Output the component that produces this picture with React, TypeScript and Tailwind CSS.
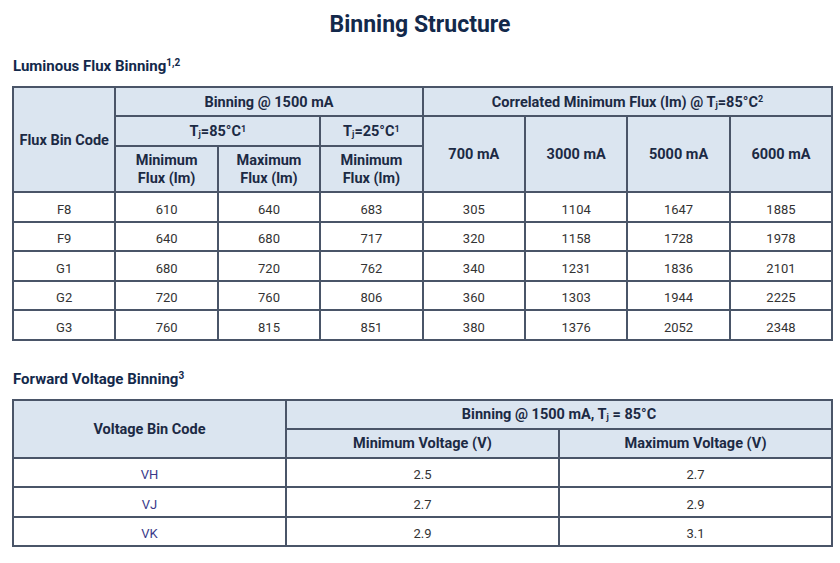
import React from "react";

const th = "border-2 border-[#4a5568] bg-[#dbe5f0] font-bold text-[14.5px] text-[#1c2a44] text-center align-middle leading-[18px] p-0 pt-[2px]";
const td = "border-2 border-[#4a5568] text-center align-middle text-[13px] text-[#333333] p-0 pt-[5px]";

const Tj = ({ v, sup }: { v: string; sup?: string }) => (
  <span>
    T<sub className="text-[9px] relative top-[1px]">j</sub>
    {v}
    {sup && <sup className="text-[9px]">{sup}</sup>}
  </span>
);

const flux = [
  ["F8", "610", "640", "683", "305", "1104", "1647", "1885"],
  ["F9", "640", "680", "717", "320", "1158", "1728", "1978"],
  ["G1", "680", "720", "762", "340", "1231", "1836", "2101"],
  ["G2", "720", "760", "806", "360", "1303", "1944", "2225"],
  ["G3", "760", "815", "851", "380", "1376", "2052", "2348"],
];

const volt = [
  ["VH", "2.5", "2.7"],
  ["VJ", "2.7", "2.9"],
  ["VK", "2.9", "3.1"],
];

export default function App() {
  return (
    <div className="w-[840px] h-[563px] bg-white overflow-hidden" style={{ fontFamily: "Roboto, 'Liberation Sans', sans-serif" }}>
      <h1 className="pt-[11px] h-[40px] text-center text-[23px] leading-[28px] font-bold text-[#13294b]">Binning Structure</h1>
      <h2 className="ml-[13px] mt-[16px] text-[15px] leading-[20px] font-bold text-[#13294b]">
        Luminous Flux Binning<sup className="text-[10px]">1,2</sup>
      </h2>
      <table className="ml-[12px] mt-[10px] w-[819px] table-fixed border-collapse">
        <colgroup>
          {Array.from({ length: 8 }).map((_, i) => (
            <col key={i} className="w-[102.4px]" />
          ))}
        </colgroup>
        <thead>
          <tr className="h-[29px]">
            <th rowSpan={3} className={th}>Flux Bin Code</th>
            <th colSpan={3} className={th}>Binning @ 1500 mA</th>
            <th colSpan={4} className={th}>
              Correlated Minimum Flux (lm) @ <Tj v="=85°C" sup="2" />
            </th>
          </tr>
          <tr className="h-[30px]">
            <th colSpan={2} className={th}><Tj v="=85°C" sup="1" /></th>
            <th className={th}><Tj v="=25°C" sup="1" /></th>
            <th rowSpan={2} className={th}>700 mA</th>
            <th rowSpan={2} className={th}>3000 mA</th>
            <th rowSpan={2} className={th}>5000 mA</th>
            <th rowSpan={2} className={th}>6000 mA</th>
          </tr>
          <tr className="h-[46px]">
            <th className={th}>Minimum<br />Flux (lm)</th>
            <th className={th}>Maximum<br />Flux (lm)</th>
            <th className={th}>Minimum<br />Flux (lm)</th>
          </tr>
        </thead>
        <tbody>
          {flux.map((r) => (
            <tr key={r[0]} className="h-[29.5px]">
              {r.map((c, i) => (
                <td key={i} className={td}>{c}</td>
              ))}
            </tr>
          ))}
        </tbody>
      </table>
      <h2 className="ml-[13px] mt-[28px] text-[15px] leading-[20px] font-bold text-[#13294b]">
        Forward Voltage Binning<sup className="text-[10px]">3</sup>
      </h2>
      <table className="ml-[12px] mt-[10px] w-[819px] table-fixed border-collapse">
        <colgroup>
          <col className="w-[273px]" />
          <col className="w-[273px]" />
          <col className="w-[273px]" />
        </colgroup>
        <thead>
          <tr className="h-[29px]">
            <th rowSpan={2} className={th}>Voltage Bin Code</th>
            <th colSpan={2} className={th}>
              Binning @ 1500 mA, T<sub className="text-[9px] relative top-[1px]">j</sub> = 85°C
            </th>
          </tr>
          <tr className="h-[29px]">
            <th className={th}>Minimum Voltage (V)</th>
            <th className={th}>Maximum Voltage (V)</th>
          </tr>
        </thead>
        <tbody>
          {volt.map((r) => (
            <tr key={r[0]} className="h-[29.5px]">
              <td className={td + " !text-[#3a3a8a]"}>{r[0]}</td>
              <td className={td}>{r[1]}</td>
              <td className={td}>{r[2]}</td>
            </tr>
          ))}
        </tbody>
      </table>
    </div>
  );
}
